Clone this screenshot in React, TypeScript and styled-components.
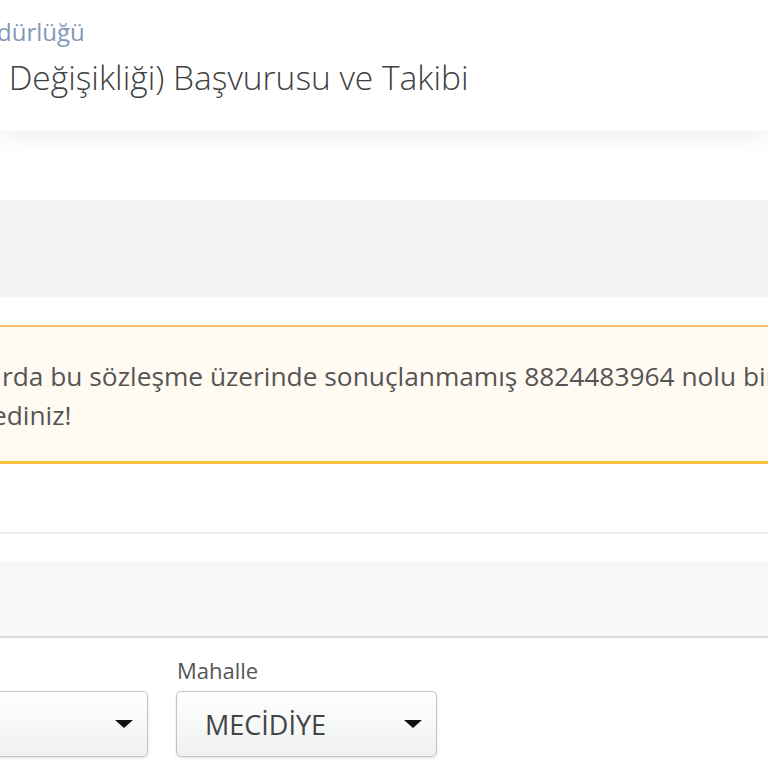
import React from "react";
import styled, { createGlobalStyle } from "styled-components";

const GlobalStyle = createGlobalStyle`
  html, body {
    margin: 0;
    padding: 0;
    background: #fff;
    overflow: hidden;
  }
  body {
    font-family: "Open Sans", "Noto Sans", sans-serif;
    color: #555;
  }
`;

const Page = styled.div`
  width: 768px;
  height: 768px;
  overflow: hidden;
  display: flex;
  flex-direction: column;
`;

const Header = styled.header`
  height: 131px;
  box-sizing: border-box;
  padding-top: 17px;
  background: #fff;
  box-shadow: 0 6px 22px rgba(0, 0, 0, 0.07);
  position: relative;
  z-index: 1;
  display: flex;
  flex-direction: column;
  gap: 7px;
`;

const Agency = styled.div`
  font-size: 24px;
  line-height: 30px;
  color: #8298b8;
  white-space: nowrap;
  margin-left: -3px;
`;

const Title = styled.h1`
  margin: 0;
  font-size: 33.5px;
  line-height: 46px;
  font-weight: 300;
  color: #3f3f3f;
  white-space: nowrap;
`;

const Main = styled.main`
  padding-top: 69px;
  display: flex;
  flex-direction: column;
`;

const Band = styled.div<{ h: number; tone: string; edge?: boolean }>`
  height: ${p => p.h}px;
  background: ${p => p.tone};
  border-bottom: ${p => (p.edge ? "2px solid #dcdde0" : "none")};
`;

const Alert = styled.div`
  margin-top: 28px;
  background: #fffaf2;
  border-top: 2px solid #f2bd62;
  border-bottom: 3px solid #f7c13c;
  padding: 30px 0 26px;
  font-size: 26.3px;
  line-height: 39px;
  color: #555;
  white-space: nowrap;
  overflow: hidden;
`;

const AlertLine = styled.div<{ shift: number }>`
  margin-left: ${p => p.shift}px;
`;

const Divider = styled.div`
  margin-top: 68px;
  height: 2px;
  background: #eeeff1;
`;

const Panel = styled.section`
  margin-top: 27px;
`;

const FormRow = styled.div`
  display: flex;
  gap: 28px;
  margin-left: -113px;
  padding-top: 17px;
`;

const Field = styled.div`
  display: flex;
  flex-direction: column;
  gap: 6px;
`;

const Label = styled.label`
  font-size: 22px;
  line-height: 30px;
  color: #555;
  padding-left: 1px;
  min-height: 30px;
`;

const Select = styled.div`
  width: 261px;
  height: 66px;
  box-sizing: border-box;
  border: 1px solid #c4c4c4;
  border-radius: 5px;
  background: linear-gradient(#ffffff, #eef0f1);
  box-shadow: 0 1px 3px rgba(0, 0, 0, 0.12);
  display: flex;
  align-items: center;
  justify-content: space-between;
  padding: 0 14px 0 28px;
  font-size: 27px;
  color: #444;
`;

const Caret = styled.span`
  width: 0;
  height: 0;
  border-left: 9px solid transparent;
  border-right: 9px solid transparent;
  border-top: 8px solid #111;
`;

export default function App() {
  return (
    <>
      <GlobalStyle />
      <Page>
        <Header>
          <Agency>dürlüğü</Agency>
          <Title>&nbsp;Değişikliği) Başvurusu ve Takibi</Title>
        </Header>
        <Main>
          <Band h={97} tone="#f3f4f6" />
          <Alert role="alert">
            <AlertLine shift={2}>
              rda bu sözleşme üzerinde sonuçlanmamış 8824483964 nolu bir başvurunuz bulunmaktadır.
            </AlertLine>
            <AlertLine shift={-8}>ediniz!</AlertLine>
          </Alert>
          <Divider />
          <Panel>
            <Band h={75} tone="#f7f8f9" edge />
            <FormRow>
              <Field>
                <Label>İlçe</Label>
                <Select>
                  <span />
                  <Caret />
                </Select>
              </Field>
              <Field>
                <Label>Mahalle</Label>
                <Select>
                  <span>MECİDİYE</span>
                  <Caret />
                </Select>
              </Field>
            </FormRow>
          </Panel>
        </Main>
      </Page>
    </>
  );
}
